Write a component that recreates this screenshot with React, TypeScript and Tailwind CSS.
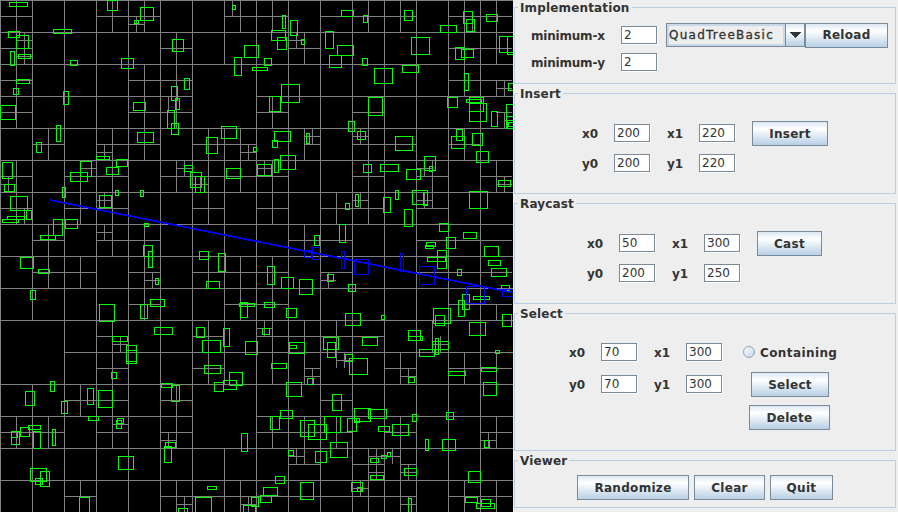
import React from "react";

const rects: number[][] = [
[9,2,28,7],[107,0,118,11],[140,7,154,21],[134,20,139,24],[232,5,236,10],[8,31,20,38],[16,35,29,49],[53,29,72,34],[172,39,184,52],[244,45,259,58],[10,51,15,66],[18,54,31,59],[70,60,78,66],[121,58,134,69],[234,57,242,76],[252,67,268,71],[16,79,30,84],[184,78,190,90],[13,88,19,95],[171,86,178,101],[63,91,69,105],[175,98,180,110],[133,102,146,111],[0,105,16,120],[167,110,175,129],[56,125,61,142],[221,126,237,139],[171,123,179,135],[137,132,154,143],[206,137,218,154],[36,142,42,153],[253,147,257,152],[96,156,110,160],[2,162,13,179],[80,161,92,177],[116,159,128,167],[106,167,119,175],[70,172,88,182],[184,165,193,172],[190,172,202,188],[195,176,205,193],[226,168,241,179],[4,184,15,192],[62,187,66,198],[115,190,119,196],[140,190,144,197],[99,195,112,208],[10,196,28,211],[26,210,32,220],[7,216,25,220],[2,219,19,223],[53,219,63,236],[65,219,78,229],[144,223,149,227],[40,235,56,240],[143,245,153,257],[148,251,153,268],[199,251,209,260],[218,253,226,272],
[282,15,286,29],[290,20,298,36],[341,10,354,17],[363,15,368,23],[404,10,413,21],[463,11,473,24],[466,19,475,32],[486,14,498,22],[440,25,457,33],[271,30,286,41],[277,37,287,50],[301,39,305,45],[325,31,334,49],[411,37,430,55],[499,36,514,53],[507,36,514,55],[337,45,354,56],[455,47,465,60],[461,49,474,58],[264,58,272,66],[329,55,342,68],[362,58,368,66],[402,65,419,73],[374,68,393,84],[464,73,469,91],[508,83,514,91],[281,84,300,103],[269,96,281,112],[368,97,383,116],[447,97,458,108],[466,99,482,103],[469,97,484,112],[469,103,487,122],[506,104,514,129],[491,111,498,127],[506,116,514,129],[507,120,514,129],[508,122,514,127],[348,121,355,132],[274,131,291,142],[306,133,310,144],[357,131,366,140],[456,129,463,141],[272,140,278,148],[395,136,413,151],[451,136,465,149],[472,133,483,146],[476,151,489,163],[280,155,296,170],[274,159,279,173],[257,164,272,176],[363,164,372,173],[380,164,399,172],[424,156,436,171],[429,166,433,172],[406,169,421,180],[498,180,511,187],[395,190,399,200],[412,190,428,205],[423,192,428,206],[469,191,488,209],[355,194,359,207],[383,197,391,213],[345,203,350,210],[404,209,413,227],[339,224,346,243],[439,223,449,232],[463,232,477,239],[314,235,320,246],[446,237,456,249],[426,242,436,247],[425,245,434,249],[484,246,499,257],[427,257,446,262],[437,250,447,269],
[20,257,34,269],[38,269,50,274],[155,278,159,285],[206,281,220,289],[30,290,36,300],[150,299,165,307],[239,303,255,307],[240,302,248,318],[140,304,148,319],[99,304,115,322],[154,327,173,335],[196,327,205,338],[223,328,230,347],[112,336,128,342],[202,340,221,353],[245,341,258,355],[126,345,137,364],[126,350,137,362],[204,365,221,374],[111,372,117,379],[229,372,243,386],[223,380,237,390],[214,382,224,392],[50,381,55,392],[161,383,173,388],[171,385,180,402],[25,391,35,406],[87,388,94,405],[98,390,113,408],[61,401,68,414],[88,416,99,421],[117,418,124,424],[116,420,122,429],[28,425,41,430],[20,427,30,437],[11,431,20,445],[11,431,18,438],[33,431,41,449],[52,429,56,446],[241,433,248,452],[165,442,176,448],[164,446,172,463],[118,456,134,470],[30,468,47,482],[40,471,50,487],[35,478,43,485],[207,486,217,490],[79,497,90,513],[195,497,212,513],[178,508,188,513],[251,497,259,507],[243,505,256,513],
[267,266,275,285],[281,277,294,289],[299,279,313,295],[327,274,334,282],[348,284,356,292],[488,260,501,266],[491,268,507,277],[457,269,462,276],[501,285,510,291],[473,296,490,300],[462,294,470,310],[458,300,465,317],[264,302,275,308],[286,308,297,318],[345,313,361,326],[381,315,385,320],[433,308,451,324],[435,315,445,326],[502,314,512,327],[469,322,486,336],[262,328,270,335],[323,337,339,350],[362,337,378,346],[408,330,421,341],[408,336,423,341],[435,338,439,355],[432,341,449,350],[419,349,435,357],[289,342,305,354],[289,345,297,349],[327,342,336,358],[345,354,353,362],[349,358,368,375],[495,350,500,354],[271,363,287,369],[448,371,466,376],[481,367,497,372],[307,378,314,385],[408,377,415,383],[483,382,497,396],[286,382,302,397],[332,394,342,411],[354,408,371,422],[368,409,387,419],[280,410,293,419],[270,416,280,430],[300,420,315,437],[308,424,327,440],[324,416,341,433],[347,418,357,432],[354,418,360,423],[378,426,390,432],[392,424,409,436],[412,414,417,422],[446,412,454,420],[425,439,429,451],[442,439,456,451],[484,440,490,448],[330,442,348,458],[315,451,327,463],[288,450,294,456],[370,458,379,463],[381,455,387,459],[387,452,391,457],[404,468,417,476],[370,475,384,480],[468,471,481,483],[275,476,285,484],[263,487,278,496],[300,482,314,500],[351,482,363,492],[357,487,362,492],[260,495,272,503],[465,497,478,503],[481,499,491,507],[476,503,495,509],[408,498,412,513],
];

const blue: number[][] = [
[304,250,312,258],[312,247,320,260],[341,251,345,269],[354,259,369,275],[400,253,404,272],[419,266,435,285],[466,286,485,304],[502,289,514,297],
];

const hLines: number[][] = [
...[0,32,64,128,160,192,224,256,288,320,384,448,480].map((y) => [y,0,513]),
[96,0,192],[96,256,513],[352,64,513],[416,0,192],[416,256,513],
[16,0,32],[16,96,160],[16,224,288],[16,320,416],[16,448,512],[24,128,144],
[48,0,32],[48,160,192],[48,288,320],[48,448,512],[40,16,32],[40,288,304],[56,16,32],
[80,0,32],[80,128,192],[80,448,512],[88,496,512],[112,0,32],[112,128,192],[112,256,288],[112,352,384],[112,496,512],[120,504,512],
[144,32,64],[144,96,160],[144,192,256],[144,304,320],[144,352,416],[144,448,480],[136,304,320],[136,352,368],[152,96,112],[152,240,256],
[176,0,32],[176,64,128],[176,160,288],[176,352,384],[176,416,448],[176,480,512],[168,80,96],[168,176,192],[168,256,272],[168,416,432],
[184,0,16],[184,192,208],[184,496,512],[208,0,32],[208,64,128],[208,192,224],[208,256,288],[208,320,384],[208,416,448],[200,96,112],[200,352,368],[200,416,432],[232,96,112],
[240,32,64],[240,96,160],[240,288,352],[240,416,512],
[272,32,96],[272,128,160],[272,192,288],[272,320,352],[272,416,512],[280,144,160],[280,320,336],[304,128,160],[304,224,288],[304,448,512],
[336,96,128],[336,192,224],[336,256,384],[328,256,272],[344,112,128],[344,432,448],[368,96,128],[368,192,224],[368,304,320],[368,384,416],[368,448,512],[360,336,352],[376,304,320],[376,400,416],
[400,64,128],[400,160,192],[400,320,352],[432,0,64],[432,96,128],[432,160,192],[432,256,352],[432,384,416],[432,480,512],[424,112,128],[440,160,176],[440,480,496],
[464,288,320],[464,352,384],[464,400,416],[456,288,304],[456,368,400],[472,368,384],[472,400,416],[488,352,368],[496,64,96],[496,160,352],[496,352,416],[496,448,512],[504,176,192],[504,240,256],[504,400,416],
];

const vLines: number[][] = [
...[0,64,96,128,160,192,256,288,320,352,384,416,448,480].map((x) => [x,0,512]),
[32,0,320],[32,384,512],[224,0,64],[224,128,384],[224,448,512],
[8,176,192],[16,0,128],[16,160,224],[16,416,448],[24,32,64],[24,208,224],[48,128,160],[48,224,288],[48,416,448],[80,160,224],[80,256,288],[80,384,416],[80,480,496],
[104,144,160],[104,192,208],[104,224,240],[112,0,32],[112,128,256],[112,320,448],[120,336,352],[136,16,32],[144,0,32],[144,64,160],[144,224,320],[152,272,288],
[168,96,112],[168,432,448],[176,32,128],[176,160,192],[176,384,448],[176,480,512],[184,160,176],[184,496,512],[200,176,192],[208,128,224],[208,256,288],[208,320,384],
[232,0,16],[240,0,32],[240,128,192],[240,256,320],[240,480,512],[248,144,160],[248,496,512],
[264,160,176],[264,320,336],[272,0,32],[272,96,128],[272,160,224],[272,256,384],[272,416,448],[296,32,48],[296,448,464],[304,32,64],[304,128,160],[304,224,256],[304,320,384],[304,416,464],
[312,128,144],[312,368,384],[336,192,224],[336,320,368],[336,416,448],[328,272,288],[344,352,368],[360,128,144],[360,192,208],[360,480,496],
[368,0,32],[368,96,224],[368,448,512],[376,448,480],[392,448,464],[400,0,32],[400,352,384],[400,416,512],[424,168,176],[424,192,208],[432,160,208],[432,320,352],[440,336,352],[408,368,384],[408,464,480],[408,496,512],
[464,0,96],[464,128,160],[464,352,384],[464,480,512],[472,16,32],[496,0,64],[496,80,96],[496,160,192],[496,304,320],[496,352,384],[496,416,448],[496,480,512],[504,80,96],[504,112,128],[504,176,192],[488,432,448],
];

function Canvas() {
  return (
    <svg width={513} height={512} viewBox="0 0 513 512" shapeRendering="crispEdges" className="block shrink-0 bg-black">
      {hLines.map(([y, a, b], i) => (
        <line key={"h" + i} x1={a} x2={b} y1={y + 0.5} y2={y + 0.5} stroke="#808080" />
      ))}
      {vLines.map(([x, a, b], i) => (
        <line key={"v" + i} y1={a} y2={b} x1={x + 0.5} x2={x + 0.5} stroke="#808080" />
      ))}
      {rects.map(([a, b, c, d], i) => (
        <rect key={"r" + i} x={a + 0.5} y={b + 0.5} width={c - a - 1} height={d - b - 1} fill="none" stroke="#00ff00" />
      ))}
      {blue.map(([a, b, c, d], i) => (
        <rect key={"b" + i} x={a + 0.5} y={b + 0.5} width={c - a - 1} height={d - b - 1} fill="none" stroke="#0000ff" />
      ))}
      <line x1={50} y1={200} x2={513} y2={292.6} stroke="#0000ff" strokeWidth={1.6} />
    </svg>
  );
}

function Panel({ title, className, children }: { title: string; className: string; children: React.ReactNode }) {
  return (
    <div className={"relative border border-[#b8cfe5] " + className}>
      <span className="absolute left-[3px] -top-[8px] h-[14px] bg-[#eeeeee] px-[2px] text-[12px] leading-[16px] font-bold tracking-[0.15px] text-[#333333]">
        {title}
      </span>
      {children}
    </div>
  );
}

function Input({ value }: { value: string }) {
  return (
    <div className="h-[18px] w-[36px] shrink-0 border border-[#7a8a99] bg-white pl-[2px] text-[12px] leading-[16px] font-normal text-[#333333] shadow-[1px_1px_0_#ffffff]">
      {value}
    </div>
  );
}

function Btn({ label, className }: { label: string; className: string }) {
  return (
    <div
      className={
        "flex h-[25px] shrink-0 items-center justify-center border border-[#7a8a99] bg-[linear-gradient(180deg,#dde8f3_0%,#ffffff_30%,#b8cfe5_100%)] text-[12px] font-bold tracking-[0.3px] text-[#333333] " +
        className
      }
    >
      {label}
    </div>
  );
}

function Coords({ a, b, c, d }: { a: string; b: string; c: string; d: string }) {
  const Cell = ({ l, v }: { l: string; v: string }) => (
    <div className="flex w-[68px] items-center">
      <span className="h-[18px] w-[32px] text-[12px] leading-[20px] font-bold text-[#333333]">{l}</span>
      <Input value={v} />
    </div>
  );
  return (
    <div className="grid grid-cols-[68px_68px] gap-x-[17px]">
      <Cell l="x0" v={a} />
      <Cell l="x1" v={b} />
      <div className="col-span-2 flex gap-x-[17px] pt-[var(--gap)]">
        <Cell l="y0" v={c} />
        <Cell l="y1" v={d} />
      </div>
    </div>
  );
}

export default function App() {
  return (
    <div className="flex h-[512px] w-[898px] overflow-hidden bg-[#eeeeee] font-['DejaVu_Sans',sans-serif]">
      <Canvas />
      <div className="flex w-[385px] flex-col gap-[9px] pl-px pt-[7px]">
        <Panel title="Implementation" className="h-[77px] w-[382px]">
          <div className="flex items-start pl-[16px] pt-[15px]">
            <div className="mt-[3px] flex flex-col gap-[9px]">
              <div className="flex items-center">
                <span className="h-[18px] w-[90px] text-[12px] leading-[20px] font-bold tracking-[-0.2px] text-[#333333]">minimum-x</span>
                <Input value="2" />
              </div>
              <div className="flex items-center">
                <span className="h-[18px] w-[90px] text-[12px] leading-[20px] font-bold tracking-[-0.2px] text-[#333333]">minimum-y</span>
                <Input value="2" />
              </div>
            </div>
            <div className="ml-[9px] flex h-[24px] w-[139px] border border-[#7a8a99]">
              <div className="flex-1 border-2 border-[#c9d8e8] bg-[#eeeeee] text-[12px] leading-[19px] font-normal tracking-[1.25px] text-[#333333] [-webkit-text-stroke:0.3px_#333333]">
                QuadTreeBasic
              </div>
              <div className="flex w-[19px] items-center justify-center border-l border-[#7a8a99] bg-[linear-gradient(180deg,#dde8f3_0%,#ffffff_30%,#b8cfe5_100%)]">
                <svg width="11" height="6" viewBox="0 0 11 6" shapeRendering="crispEdges">
                  <path d="M0 0h11L5.5 6z" fill="#333333" />
                </svg>
              </div>
            </div>
            <Btn label="Reload" className="w-[83px] pb-px" />
          </div>
        </Panel>

        <Panel title="Insert" className="h-[101px] w-[382px]">
          <div className="flex items-start pl-[67px] pt-[30px] [--gap:12px]">
            <Coords a="200" b="220" c="200" d="220" />
            <Btn label="Insert" className="-mt-[3px] ml-[17px] w-[76px]" />
          </div>
        </Panel>

        <Panel title="Raycast" className="h-[101px] w-[382px]">
          <div className="flex items-start pl-[72px] pt-[30px] [--gap:12px]">
            <Coords a="50" b="300" c="200" d="250" />
            <Btn label="Cast" className="-mt-[3px] ml-[17px] w-[65px]" />
          </div>
        </Panel>

        <Panel title="Select" className="h-[138px] w-[382px]">
          <div className="flex items-start pl-[54px] pt-[29px] [--gap:14px]">
            <Coords a="70" b="300" c="70" d="300" />
            <div className="ml-[21px] flex w-[94px] flex-col items-center gap-[8px]">
              <div className="mb-[3px] flex h-[18px] items-center gap-[5px] self-start">
                <span className="h-[12px] w-[12px] rounded-full border border-[#8fa3b6] bg-[linear-gradient(135deg,#f8fbff,#c4d7ea)]" />
                <span className="h-[18px] text-[12px] leading-[20px] font-bold tracking-[0.4px] text-[#333333]">Containing</span>
              </div>
              <Btn label="Select" className="w-[78px]" />
              <Btn label="Delete" className="-ml-px w-[81px]" />
            </div>
          </div>
        </Panel>

        <Panel title="Viewer" className="h-[48px] w-[382px]">
          <div className="flex justify-center gap-[5px] pt-[14px]">
            <Btn label="Randomize" className="w-[112px]" />
            <Btn label="Clear" className="w-[71px]" />
            <Btn label="Quit" className="w-[63px]" />
          </div>
        </Panel>
      </div>
    </div>
  );
}
